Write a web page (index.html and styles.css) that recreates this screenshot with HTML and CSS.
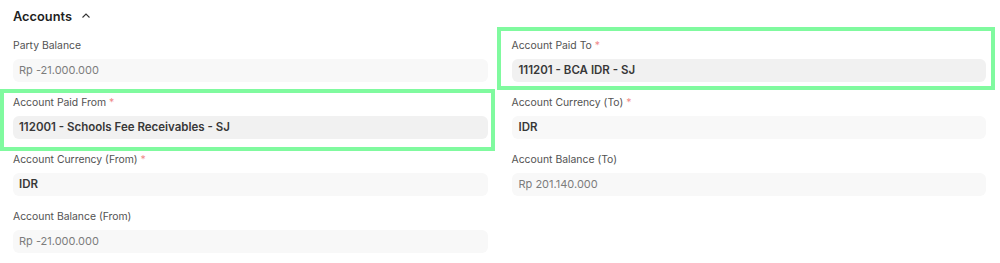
FILE: index.html
```html
<!DOCTYPE html>
<html lang="en">
<head>
    <meta charset="UTF-8">
    <meta name="viewport" content="width=device-width, initial-scale=1.0">
    <title>Accounts</title>
    <link rel="stylesheet" href="styles.css">
</head>
<body>

    <section class="section">
        <div class="section-head">
            <span class="section-title">Accounts</span>
            <svg class="chevron" width="12" height="12" viewBox="0 0 12 12">
                <path d="M2.5 7.5 L6 4 L9.5 7.5" fill="none" stroke="#333" stroke-width="1.1"/>
            </svg>
        </div>

        <div class="grid">
            <div class="col">
                <div class="field">
                    <div class="label">Party Balance</div>
                    <div class="input readonly">Rp -21.000.000</div>
                </div>
                <div class="field">
                    <div class="label">Account Paid From <span class="req">*</span></div>
                    <div class="input link">112001 - Schools Fee Receivables - SJ</div>
                    <div class="mark mark-from"></div>
                </div>
                <div class="field">
                    <div class="label">Account Currency (From) <span class="req">*</span></div>
                    <div class="input select">IDR</div>
                </div>
                <div class="field">
                    <div class="label">Account Balance (From)</div>
                    <div class="input readonly">Rp -21.000.000</div>
                </div>
            </div>

            <div class="col">
                <div class="field">
                    <div class="label">Account Paid To <span class="req">*</span></div>
                    <div class="input link">111201 - BCA IDR - SJ</div>
                    <div class="mark mark-to"></div>
                </div>
                <div class="field">
                    <div class="label">Account Currency (To) <span class="req">*</span></div>
                    <div class="input select">IDR</div>
                </div>
                <div class="field">
                    <div class="label">Account Balance (To)</div>
                    <div class="input readonly">Rp 201.140.000</div>
                </div>
            </div>
        </div>
    </section>

</body>
</html>
```

FILE: styles.css
```css
body {
    margin: 0;
    font-family: Inter, "Noto Sans", sans-serif;
    background: #fff;
    color: #1f1f1f;
}
.section {
    padding: 6px 14px 0 13px;
}
.section-head {
    display: flex;
    align-items: center;
    height: 20px;
    gap: 8px;
}
.section-title {
    font-size: 12.8px;
    font-weight: 600;
    color: #1f1f1f;
}
.chevron {
    margin-top: -1px;
}
.grid {
    display: grid;
    grid-template-columns: 1fr 1fr;
    column-gap: 24px;
    margin-top: 13px;
}
.col {
    display: flex;
    flex-direction: column;
    gap: 14px;
}
.field {
    position: relative;
}
.label {
    font-size: 10.4px;
    line-height: 14px;
    color: #525252;
    margin-bottom: 6px;
}
.req {
    color: #f08a8a;
}
.input {
    height: 23px;
    line-height: 23px;
    padding: 0 6px;
    border-radius: 6px;
    font-size: 11px;
    background: #f8f8f8;
}
.col + .col .input {
    padding-left: 7px;
}
.input.readonly {
    color: #7c7c7c;
}
.input.link {
    background: #f1f1f1;
    font-weight: 600;
    font-size: 11.5px;
    color: #383838;
}
.input.select {
    font-weight: 600;
    font-size: 11.5px;
    color: #383838;
}
.mark {
    position: absolute;
    border: 4px solid #80fa9f;
    pointer-events: none;
}
.mark-from {
    top: -7px;
    bottom: -12px;
    left: -13px;
    right: -7px;
}
.mark-to {
    top: -12px;
    bottom: -8px;
    left: -15px;
    right: -9px;
}
```
